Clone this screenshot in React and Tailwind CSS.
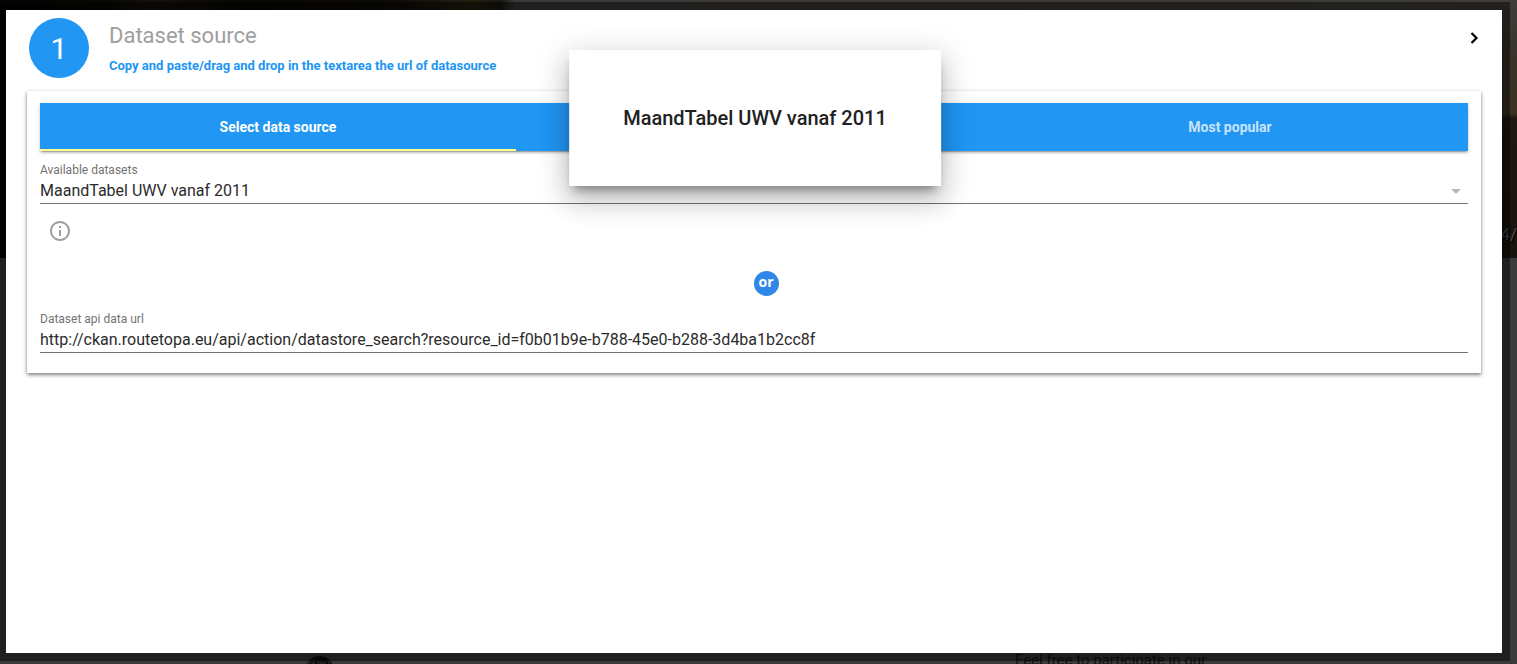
import { useState } from "react";

const tabs = [
  { id: "select", label: "Select data source" },
  { id: "search", label: "" },
  { id: "popular", label: "Most popular" },
];

function Backdrop() {
  return (
    <div aria-hidden="true" className="absolute inset-0 flex flex-col overflow-hidden bg-[#3a3a3a]">
      <div className="flex h-[258px] shrink-0 items-end justify-end bg-[linear-gradient(90deg,#040403_0%,#080704_7%,#14110a_10%,#080705_16%,#0d0b06_26%,#241f10_31%,#1a170d_33%,#393a3a_34%,#3b3b3a_42%,#3d3832_60%,#3b3a38_65%,#3f3933_70%,#3c3b38_85%,#403d3a_100%)]">
        <div className="flex h-full w-[20px] items-end bg-[linear-gradient(180deg,#403d3a_0%,#39332b_20%,#3d3220_44%,#1f1811_46%,#19130d_100%)]" />
      </div>
      <span className="absolute top-[222px] right-0 text-[17px] leading-6 text-[#4a4e52] [text-shadow:1px_1px_0_#000]">
        .4/
      </span>
      <svg className="absolute top-[655px] left-[307px]" width="25" height="24" viewBox="0 0 25 24">
        <ellipse cx="12.500" cy="10" rx="12.500" ry="9" fill="#0b0b0b" />
        <path
          d="M1 6v4M1 6h3v2H1M6 6v3h3M6 6h3M11 9V6l3 3V6M16 6v3h2V6M20 6h4M22 6v4"
          fill="none"
          stroke="#2c2c2c"
          strokeWidth="1"
        />
      </svg>
      <span className="absolute top-[650px] left-[1015px] text-[15px] leading-5 whitespace-nowrap text-[#101010]">
        Feel free to participate in our
      </span>
    </div>
  );
}

function StepHeader() {
  return (
    <header className="flex items-start pt-2 pr-[18px] pl-[23px]">
      <div className="flex size-[60px] shrink-0 items-center justify-center rounded-full bg-[#2196f3] text-[30px] text-white">
        1
      </div>
      <div className="ml-5 flex-1">
        <h1 className="mt-1 text-[22px] leading-7 text-[#9e9e9e]">Dataset source</h1>
        <p className="mt-[6px] text-[13px] leading-5 font-bold text-[#2196f3]">
          Copy and paste/drag and drop in the textarea the url of datasource
        </p>
      </div>
      <button type="button" aria-label="Next step" className="mt-2 flex h-6 w-5 items-center justify-center text-black">
        <svg width="20" height="24" viewBox="0 0 20 24" fill="none">
          <path d="M7.500 7l5 5-5 5" stroke="currentColor" strokeWidth="2.200" />
        </svg>
      </button>
    </header>
  );
}

function Tabs({ active, onChange }) {
  return (
    <div
      role="tablist"
      className="grid h-12 grid-cols-3 bg-[#2196f3] shadow-[0_2px_2px_0_rgba(0,0,0,0.14),0_1px_5px_0_rgba(0,0,0,0.12),0_3px_1px_-2px_rgba(0,0,0,0.2)]"
    >
      {tabs.map((tab) => (
        <button
          key={tab.id}
          type="button"
          role="tab"
          aria-label={tab.label || "Search"}
          aria-selected={active === tab.id}
          onClick={() => onChange(tab.id)}
          className={
            active === tab.id
              ? "border-b-2 border-[#ffff8d] pt-[2px] text-[14px] font-bold text-white"
              : "border-b-2 border-transparent pt-[2px] text-[14px] font-bold text-white/75"
          }
        >
          {tab.label}
        </button>
      ))}
    </div>
  );
}

const fieldClass =
  "block h-6 w-full appearance-none bg-transparent p-0 text-[16px] leading-6 text-[#2b2b2b] outline-none";

export default function App() {
  const [active, setActive] = useState("select");
  const [url, setUrl] = useState(
    "http://ckan.routetopa.eu/api/action/datastore_search?resource_id=f0b01b9e-b788-45e0-b288-3d4ba1b2cc8f"
  );

  return (
    <div className="relative flex min-h-screen flex-col overflow-hidden font-['Roboto',sans-serif]">
      <Backdrop />
      <div className="relative mt-[2px] mr-[7px] mb-[3px] flex flex-1 flex-col bg-black/45 py-2 pr-2 pl-[6px]">
        <main className="flex-1 bg-white">
          <StepHeader />
          <section className="mt-[13px] mr-[21px] ml-[21px] bg-white px-[13px] pt-3 pb-5 shadow-[0_2px_4px_0_rgba(0,0,0,0.4),0_1px_3px_0_rgba(0,0,0,0.2)]">
            <Tabs active={active} onChange={setActive} />

            <div className="mt-[9px] border-b border-[#737373]">
              <label htmlFor="dataset" className="block text-[12px] leading-5 text-[#737373]">
                Available datasets
              </label>
              <div className="flex h-[23px] items-center pb-[2px]">
                <select id="dataset" className={fieldClass}>
                  <option>MaandTabel UWV vanaf 2011</option>
                </select>
                <svg className="pointer-events-none -ml-6 shrink-0" width="24" height="24" viewBox="0 0 24 24">
                  <path d="M7 10l5 5 5-5z" fill="#b9b9b9" />
                </svg>
              </div>
            </div>

            <button type="button" aria-label="Dataset information" className="mt-[15px] ml-2 block text-[#9e9e9e]">
              <svg width="24" height="24" viewBox="0 0 24 24" fill="currentColor">
                <path d="M11 17h2v-6h-2v6zm1-15C6.480 2 2 6.480 2 12s4.480 10 10 10 10-4.480 10-10S17.520 2 12 2zm0 18c-4.410 0-8-3.590-8-8s3.590-8 8-8 8 3.590 8 8-3.590 8-8 8zM11 9h2V7h-2v2z" />
              </svg>
            </button>

            <div className="mt-7 flex justify-center pl-6">
              <span className="flex size-[25px] items-center justify-center rounded-full bg-[#2f87e8] pb-1 font-['Open_Sans',sans-serif] text-[14px] leading-5 font-bold text-white">
                or
              </span>
            </div>

            <div className="mt-[13px] border-b border-[#737373]">
              <label htmlFor="api-url" className="block text-[12px] leading-5 text-[#737373]">
                Dataset api data url
              </label>
              <div className="flex h-[23px] items-center pb-[2px]">
                <input
                  id="api-url"
                  type="text"
                  value={url}
                  onChange={(e) => setUrl(e.target.value)}
                  className={fieldClass}
                />
              </div>
            </div>
          </section>
        </main>
        <div
          role="dialog"
          aria-label="Selected dataset"
          className="absolute top-12 left-1/2 -translate-x-1/2 bg-white px-[54px] py-[54px] shadow-[0_16px_24px_2px_rgba(0,0,0,0.14),0_6px_30px_5px_rgba(0,0,0,0.12),0_8px_10px_-5px_rgba(0,0,0,0.4)]"
        >
          <h2 className="text-[20px] leading-7 font-medium whitespace-nowrap text-[#212121]">
            MaandTabel UWV vanaf 2011
          </h2>
        </div>
      </div>
    </div>
  );
}
